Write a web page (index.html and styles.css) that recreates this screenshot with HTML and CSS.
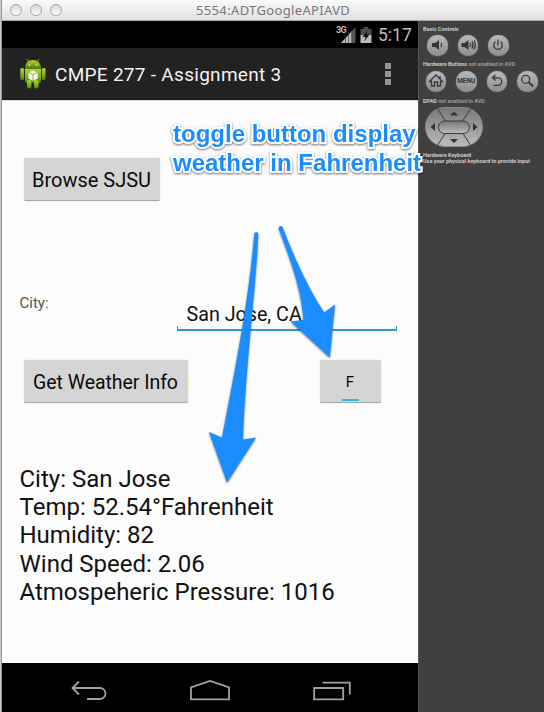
FILE: index.html
```html
<!DOCTYPE html>
<html lang="en">
<head>
<meta charset="utf-8">
<title>5554:ADTGoogleAPIAVD</title>
<link rel="stylesheet" href="styles.css">
</head>
<body>
<div class="desktop">
  <div class="window">
    <header class="titlebar">
      <div class="lights"><i></i><i></i><i></i></div>
      <span class="window-title">5554:ADTGoogleAPIAVD</span>
    </header>
    <div class="workspace">
      <main class="phone">
        <div class="status">
          <svg class="signal" width="18" height="18" viewBox="0 0 18 18"><path d="M3 17 17.500 1V17Z" fill="#555"/><path d="M3 17 14 5V17Z" fill="#b9b9b9"/><path d="M7.500 9V17M10.500 6V17M13.500 4V17" stroke="#333" stroke-width=".6"/></svg>
          <span class="network">3G</span>
          <svg class="battery" width="12" height="18" viewBox="0 0 12 18"><path d="M3.500 1h5v2H11.500V9H.5V3h3z" fill="#4b4e4b"/><path d="M.5 9h11v8H.5z" fill="#bbb"/><path d="M7.500 4 2.500 11h3.200L4.200 15.500 9.500 8.500H6.300z" fill="#111"/></svg>
          <span class="clock">5:17</span>
        </div>
        <div class="actionbar">
          <svg class="robot" width="26" height="32" viewBox="0 0 26 32">
            <defs><linearGradient id="green" x1="0" y1="0" x2="0" y2="1"><stop offset="0" stop-color="#add72c"/><stop offset=".5" stop-color="#86b51d"/><stop offset="1" stop-color="#527c16"/></linearGradient></defs>
            <path d="M8.500 4 7.300 1M17.500 4 18.700 1" stroke="#7fa522" stroke-width="1"/>
            <g fill="url(#green)"><path d="M5 10C5 5 8.500 2 13 2s8 3 8 8z"/><path d="M5 10.500h16V23q0 2-2 2H7q-2 0-2-2z"/><rect x=".3" y="10" width="3.800" height="12" rx="1.600"/><rect x="21.800" y="10" width="3.800" height="12" rx="1.600"/><rect x="7" y="22" width="4.500" height="8.500" rx="1.800"/><rect x="14" y="22" width="4.500" height="8.500" rx="1.800"/></g>
            <circle cx="9.500" cy="7" r=".8" fill="#e6f1c5"/><circle cx="16.500" cy="7" r=".8" fill="#e6f1c5"/>
            <path d="m8.500 14.500 4.500-2 4.700 2v6L13 23l-4.500-2.500z" fill="#f4f6ed"/><path d="m8.500 14.500 4.500 2 4.700-2M13 16.500V23" fill="none" stroke="#83a642" stroke-width=".8"/>
          </svg>
          <h1>CMPE 277 - Assignment 3</h1>
          <div class="overflow"><i></i><i></i><i></i></div>
        </div>
        <section class="content">
          <button class="btn browse">Browse SJSU</button>
          <div class="city-row">
            <label for="city">City:</label>
            <div class="field"><input id="city" value="San Jose, CA"></div>
          </div>
          <div class="action-row">
            <button class="btn weather">Get Weather Info</button>
            <button class="btn toggle">F</button>
          </div>
          <div class="results">
            <p>City: San Jose</p><p>Temp: 52.54°Fahrenheit</p><p>Humidity: 82</p><p>Wind Speed: 2.06</p><p>Atmospeheric Pressure: 1016</p>
          </div>
        </section>
        <nav class="navbar">
          <svg width="38" height="24" viewBox="0 0 38 24"><path d="M10 1.500 3.500 8 10 14.500M4 8H31a5.500 5.500 0 0 1 0 11H18"/></svg>
          <svg width="40" height="24" viewBox="0 0 40 24"><path d="M1 19.300V7.500L20 .9l19 6.600v11.800z"/></svg>
          <svg width="38" height="24" viewBox="0 0 38 24"><path d="M1.200 8h29v11.300h-29zM9.500 2.600h27.300v12"/></svg>
        </nav>
      </main>
      <aside class="controls">
        <p class="cap basic">Basic Controls</p>
        <div class="keys">
          <span class="key"><svg viewBox="0 0 20 20"><path class="solid" d="M5 8h3l4-3v10l-4-3H5z"/><path d="M14 8q1.300 2 0 4"/></svg></span>
          <span class="key"><svg viewBox="0 0 20 20"><path class="solid" d="M3.500 8h3l4-3v10l-4-3h-3z"/><path d="M12 8q1.300 2 0 4M14 6.500q2 3.500 0 7M16 5.500q2.500 4.500 0 9"/></svg></span>
          <span class="key"><svg viewBox="0 0 20 20"><path d="M7.500 6.500a4.300 4.300 0 1 0 5 0M10 4.500v6"/></svg></span>
        </div>
        <p class="cap hardware">Hardware Buttons <span>not enabled in AVD</span></p>
        <div class="keys wide">
          <span class="key"><svg viewBox="0 0 20 20"><path d="M3.500 10.500 10 4l6.500 6.500H14.500V15h-3v-4h-3v4h-3v-4.500zM14 8V5"/></svg></span>
          <span class="key menu">MENU</span>
          <span class="key"><svg viewBox="0 0 20 20"><path d="M8.500 4 5.500 6.800l3 2.800M6 6.800h5a3.700 3.700 0 0 1 0 7.500H6.500"/></svg></span>
          <span class="key"><svg viewBox="0 0 20 20"><circle cx="8.700" cy="8.300" r="4"/><path d="m11.700 11.300 4.300 4" stroke-width="2"/></svg></span>
        </div>
        <p class="cap dpad-label">DPAD <span>not enabled in AVD</span></p>
        <svg class="dpad" width="58" height="40" viewBox="0 0 58 40">
          <defs><linearGradient id="metal" x1="0" y1="0" x2="0" y2="1"><stop offset="0" stop-color="#777"/><stop offset="1" stop-color="#bcbcbc"/></linearGradient></defs>
          <rect x=".5" y=".5" width="57" height="39" rx="19.500" fill="url(#metal)" stroke="#8a8a8a"/>
          <path d="m12 1 9 14M46 1l-9 14M12 39l9-14M46 39l-9-14" stroke="#3b3b3b"/>
          <rect x="13.500" y="14" width="31" height="12.500" rx="6.200" fill="url(#metal)" stroke="#3b3b3b"/>
          <path d="m25 8.500 4-4 4 4zM25 32l4 4 4-4zM10 16l-4.500 4 4.500 4zM48 16l4.500 4-4.500 4z" fill="#333"/>
        </svg>
        <p class="cap keyboard">Hardware Keyboard<br>Use your physical keyboard to provide input</p>
      </aside>
    </div>
  </div>
  <svg class="arrows" width="544" height="712" viewBox="0 0 544 712">
    <path d="M254.300 233.500Q256.200 230.500 258.300 233.500C256 290 246 360 243 439.500L256 437.500 227 482.500 209 432 222 437.500C235 370 249 300 254.300 233.500Z"/>
    <path d="M278.500 228Q280 224.500 282.500 227C294 257 309 290 324.300 312.500L335 304.500 329.800 357.500 290.500 321.500 303.500 320C301 286 289 257 278.500 228Z"/>
  </svg>
  <p class="note">toggle button display<br>weather in Fahrenheit</p>
</div>
</body>
</html>
```
FILE: styles.css
```css
* { box-sizing: border-box; }
body { margin: 0; font-family: Roboto, sans-serif; }
p, h1 { margin: 0; }
.desktop { position: relative; width: 544px; height: 712px; overflow: hidden; padding-left: 2px; background: linear-gradient(90deg, #c6c6c6 1px, #999 1px); }
.window { height: 712px; }
.titlebar { height: 21px; display: flex; align-items: center; background: linear-gradient(#fafafa, #e0e0e0); border-bottom: 1px solid #aaa; padding-left: 8px; }
.lights { display: flex; gap: 8px; width: 186px; }
.lights i { width: 12px; height: 12px; border: 1px solid #a5a5a5; border-radius: 50%; background: linear-gradient(#d5d5d5, #fff); }
.window-title { font: 13px/18px "Noto Sans", sans-serif; letter-spacing: .35px; color: #777; white-space: nowrap; }
.workspace { display: flex; height: 691px; }
.phone { width: 416px; display: flex; flex-direction: column; background: #fcfcfc; }
.status { height: 27px; display: flex; align-items: center; background: #000; padding-left: 335px; color: #bcbcbc; }
.network { font-size: 9px; line-height: 10px; font-weight: 700; margin: -9px 12px 0 -19px; width: 12px; letter-spacing: -.6px; text-shadow: 0 0 1px #000, 0 0 2px #000; }
.signal { width: 18px; flex: none; transform: translateX(1px); }
.battery { flex: none; margin-left: 5px; transform: translateX(-5px); }
.clock { font-size: 17.500px; margin-left: 1px; }
.actionbar { height: 52px; display: flex; align-items: center; padding: 0 27px 0 18px; background: #222; border-bottom: 1px solid #161616; }
.robot { flex: none; }
h1 { font-size: 19px; line-height: 22px; font-weight: 400; letter-spacing: .29px; color: #f3f3f3; margin: 2px 0 0 9px; flex: 1; white-space: nowrap; }
.overflow { display: grid; gap: 2px; }
.overflow i { width: 6px; height: 6px; background: #939393; }
.content { height: 563px; padding: 57px 18px 0 17.500px; border-top: 1px solid #ddd; }
.btn { font: 20px/43px Roboto, sans-serif; height: 43px; padding: 1px 0 0; border: 0; border-bottom: 1px solid #aaa; border-radius: 2px; background: #d5d5d5; color: #0b0b0b; display: block; box-shadow: 0 0 1px #aaa; white-space: nowrap; }
.browse { width: 136px; margin-left: 4px; }
.city-row { display: flex; margin-top: 90px; height: 40px; }
label { width: 157.500px; padding-top: 3px; font-size: 15px; line-height: 18px; color: #555; }
.field { width: 220px; height: 40px; padding: 11px 0 0 9.500px; border-bottom: 2px solid #2d9fc6; background: linear-gradient(#2d9fc6, #2d9fc6) left bottom/1px 3px no-repeat, linear-gradient(#2d9fc6, #2d9fc6) right bottom/1px 3px no-repeat; }
input { width: 190px; height: 26px; padding: 0; border: 0; outline: 0; background: transparent; font: 19.700px/26px Roboto, sans-serif; color: #111; }
.action-row { display: flex; justify-content: space-between; margin-top: 29px; padding: 0 19.500px 0 4px; }
.weather { width: 164px; font-size: 19.500px; letter-spacing: -.05px; }
.toggle { width: 61px; font-size: 15px; background: linear-gradient(#33b5e5, #33b5e5) 22px 39px/17px 2px no-repeat #d5d5d5; }
.results { margin-top: 62px; font-size: 24px; line-height: 28.200px; color: #111; white-space: nowrap; }
.navbar { height: 49px; display: flex; background: #000; padding: 17px 67px 0 67px; justify-content: space-between; }
.navbar svg { fill: none; stroke: #a1a1a1; stroke-width: 1.800; }
.controls { width: 126px; background: #404040; padding-left: 4px; border-left: 1px solid #555; }
.cap { font-size: 5.500px; line-height: 6px; font-weight: 700; letter-spacing: -.02px; color: #c8c8c8; white-space: nowrap; }
.cap span { color: #999; }
.basic { margin-top: 5px; }
.keys { display: flex; gap: 10px; padding-left: 4px; margin-top: 3px; }
.key { width: 20.500px; height: 20.500px; border-radius: 50%; background: linear-gradient(#b9b9b9, #8d8d8d); box-shadow: 0 0 1px #ccc; display: flex; align-items: center; justify-content: center; }
.key svg { width: 20px; height: 20px; fill: none; stroke: #383838; stroke-width: 1.300; }
.key .solid { fill: #383838; stroke: none; }
.hardware { margin-top: 5.500px; }
.wide { padding-left: 2.500px; margin-top: 4px; }
.menu { font-size: 6.500px; font-weight: 700; color: #333; }
.dpad-label { margin-top: 6px; }
.dpad { display: block; margin: 3px 0 0 2px; }
.keyboard { margin-top: 5px; }
.arrows { position: absolute; inset: 0; fill: #1c8dff; filter: drop-shadow(0 1px 1px rgba(0,0,0,.5)); }
.note { position: absolute; left: 173px; top: 119px; font: bold 24px/29px "Liberation Sans", sans-serif; color: #1c8dff; white-space: nowrap; -webkit-text-stroke: 4px #fff; paint-order: stroke fill; filter: drop-shadow(0 1px 1px rgba(0,0,0,.55)); }
```
